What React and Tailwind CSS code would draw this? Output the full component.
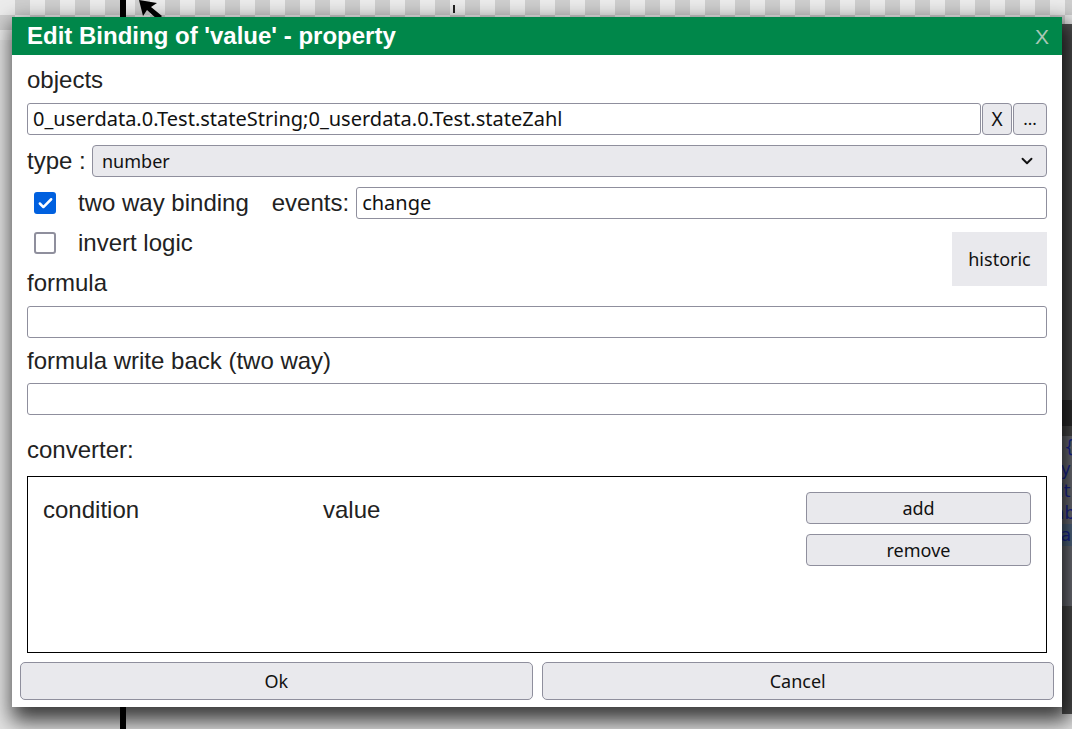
import { ChevronDown, Check } from 'lucide-react';

const btn = 'rounded-[4px] border border-[#8f8f9d] bg-[#e9e9ed] text-[#111] font-["Noto_Sans",sans-serif]';
const field = 'h-[32px] rounded-[3px] border border-[#8f8f9d] bg-white px-[5px] text-[20px] text-[#111] font-["Noto_Sans",sans-serif] flex items-center';
const label = 'h-[24px] text-[24px] leading-[24px] text-[#222] font-["Liberation_Sans",Arial,sans-serif] whitespace-nowrap';

const Checkbox = ({ checked }) =>
  checked ? (
    <div className="w-[22px] h-[22px] rounded-[3px] bg-[#0060df] flex items-center justify-center">
      <Check size={17} strokeWidth={3.5} className="text-white" />
    </div>
  ) : (
    <div className="w-[22px] h-[22px] rounded-[3px] border-2 border-[#8f8f9d] bg-white" />
  );

const Background = () => (
  <>
    <div className="absolute left-0 top-0 w-full h-[40px] bg-[repeating-conic-gradient(#cfcfcf_0_25%,#ececec_0_50%)] bg-[length:30px_30px]" />
    <div className="absolute left-[120px] top-0 w-[6px] h-full bg-black" />
    <svg className="absolute left-[136px] top-0" width="30" height="20" viewBox="0 0 30 20">
      <path d="M3 0 L7 16 L11 10 L22 20 L26 16 L15 7 L21 3 Z" fill="#000" />
    </svg>
    <div className="absolute left-[453px] top-[5px] w-[2px] h-[8px] bg-[#222]" />
    <div className="absolute left-[1062px] top-[24px] w-[10px] h-[690px] bg-[#555]" />
    <div className="absolute left-[1062px] top-[400px] w-[10px] h-[26px] bg-[#333]" />
    <div className="absolute left-[1062px] top-[436px] w-[10px] h-[170px] bg-[#7d7f88] overflow-hidden font-['DejaVu_Sans',sans-serif] text-[17px] leading-[22px] text-[#1b2bb0]">
      <div className="pl-[2px]">{'{'}</div>
      <div className="-ml-[6px]">ly</div>
      <div className="-ml-[3px]">lt</div>
      <div className="-ml-[8px]">ab</div>
      <div className="-ml-[6px] bg-[#5f7896]">la</div>
    </div>
  </>
);

export default function App() {
  return (
    <div className="relative w-[1072px] h-[729px] overflow-hidden bg-[#e3e3e3]">
      <Background />
      <div className="absolute left-[12px] top-[17px] w-[1050px] h-[690px] bg-white flex flex-col overflow-hidden shadow-[4px_10px_20px_4px_rgba(0,0,0,0.75)]">
        <div className="h-[38px] bg-[#00874a] flex items-center justify-between pl-[15px] pr-[13px] shrink-0">
          <span className="text-white font-bold text-[24px] leading-none font-['Liberation_Sans',Arial,sans-serif]">
            Edit Binding of 'value' - property
          </span>
          <span className="text-[#a8c8b6] text-[21px] leading-none font-['Liberation_Sans',Arial,sans-serif]">X</span>
        </div>

        <div className="flex flex-col px-[15px] pt-[13px]">
          <div className={label}>objects</div>
          <div className="flex mt-[11px] h-[32px]">
            <div className={`${field} flex-1`}>0_userdata.0.Test.stateString;0_userdata.0.Test.stateZahl</div>
            <button className={`${btn} w-[30px] ml-[1px] text-[19px]`}>X</button>
            <button className={`${btn} w-[34px] ml-[1px] text-[17px]`}>...</button>
          </div>

          <div className="flex items-center mt-[10px]">
            <span className={`${label} w-[65px]`}>type :</span>
            <div className="flex-1 h-[32px] rounded-[4px] border border-[#8f8f9d] bg-[#e9e9ed] flex items-center justify-between pl-[9px] pr-[10px] text-[18px] text-[#111] font-['Noto_Sans',sans-serif]">
              <span>number</span>
              <ChevronDown size={18} strokeWidth={2.5} className="text-[#111]" />
            </div>
          </div>

          <div className="flex items-center h-[32px] mt-[10px]">
            <div className="ml-[7px]"><Checkbox checked /></div>
            <span className={`${label} ml-[22px]`}>two way binding</span>
            <span className={`${label} ml-[23px]`}>events:</span>
            <div className={`${field} flex-1 ml-[7px] text-[19px]`}>change</div>
          </div>

          <div className="flex mt-[13px]">
            <div className="flex-1 flex flex-col">
              <div className="flex items-center h-[22px]">
                <div className="ml-[7px]"><Checkbox /></div>
                <span className={`${label} ml-[22px]`}>invert logic</span>
              </div>
              <div className={`${label} mt-[17px]`}>formula</div>
            </div>
            <button className="w-[95px] h-[54px] bg-[#e9e9ed] text-[18px] text-[#111] font-['Noto_Sans',sans-serif]">
              historic
            </button>
          </div>

          <div className={`${field} mt-[11px]`} />
          <div className={`${label} mt-[11px]`}>formula write back (two way)</div>
          <div className={`${field} mt-[10px]`} />
          <div className={`${label} mt-[23px]`}>converter:</div>

          <div className="mt-[14px] h-[177px] border border-black flex justify-between pl-[15px] pr-[15px] pt-[15px]">
            <div className="flex text-[24px] text-[#222] font-['Liberation_Sans',Arial,sans-serif] h-[36px] items-center">
              <span className="w-[280px]">condition</span>
              <span>value</span>
            </div>
            <div className="flex flex-col gap-[10px] w-[225px]">
              <button className={`${btn} h-[32px] text-[18px]`}>add</button>
              <button className={`${btn} h-[32px] text-[18px]`}>remove</button>
            </div>
          </div>
        </div>

        <div className="flex gap-[9px] px-[8px] pt-[9px]">
          <button className={`${btn} flex-1 h-[38px] text-[18px] rounded-[5px]`}>Ok</button>
          <button className={`${btn} flex-1 h-[38px] text-[18px] rounded-[5px]`}>Cancel</button>
        </div>
      </div>
    </div>
  );
}
